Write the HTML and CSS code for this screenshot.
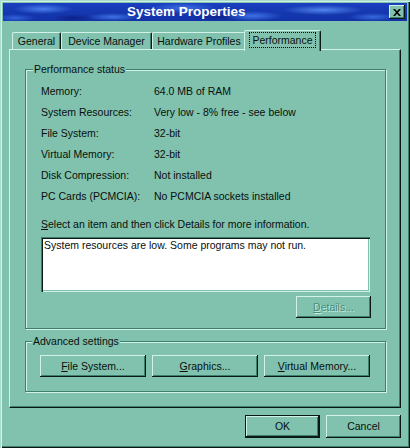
FILE: index.html
```html
<!DOCTYPE html>
<html>
<head>
<meta charset="utf-8">
<title>System Properties</title>
<link rel="stylesheet" href="styles.css">
</head>
<body>
<div class="window">
  <div class="titlebar">
    <span class="title">System Properties</span>
    <span class="close-btn">
      <svg width="8" height="7" viewBox="0 0 8 7"><path d="M0 0h2l2 2.2L6 0h2L5 3.5 8 7H6L4 4.8 2 7H0l3-3.5z" fill="#000"/></svg>
    </span>
  </div>
  <div class="body">
    <div class="tabs">
      <div class="tab tab-general">General</div>
      <div class="tab tab-device">Device Manager</div>
      <div class="tab tab-hardware">Hardware Profiles</div>
      <div class="tab tab-perf selected"><span class="focus">Performance</span></div>
    </div>
    <div class="panel">
      <fieldset class="group status">
        <legend>Performance status</legend>
        <div class="rows">
          <div>Memory:</div><div>64.0 MB of RAM</div>
          <div>System Resources:</div><div>Very low - 8% free - see below</div>
          <div>File System:</div><div>32-bit</div>
          <div>Virtual Memory:</div><div>32-bit</div>
          <div>Disk Compression:</div><div>Not installed</div>
          <div>PC Cards (PCMCIA):</div><div>No PCMCIA sockets installed</div>
        </div>
        <div class="hint"><u>S</u>elect an item and then click Details for more information.</div>
        <div class="listbox">System resources are low. Some programs may not run.</div>
        <div class="details-row"><button class="btn details" disabled><u>D</u>etails...</button></div>
      </fieldset>
      <fieldset class="group advanced">
        <legend>Advanced settings</legend>
        <div class="adv-buttons">
          <button class="btn adv"><u>F</u>ile System...</button>
          <button class="btn adv"><u>G</u>raphics...</button>
          <button class="btn adv"><u>V</u>irtual Memory...</button>
        </div>
      </fieldset>
    </div>
    <div class="actions">
      <button class="btn action default">OK</button>
      <button class="btn action">Cancel</button>
    </div>
  </div>
</div>
</body>
</html>
```
FILE: styles.css
```css
html, body {
  margin: 0;
  padding: 0;
  background: #80c2ae;
}
body {
  font-family: "Liberation Sans", Arial, sans-serif;
  font-size: 10.5px;
  line-height: 13px;
  color: #0a0f0d;
}
.window {
  width: 410px;
  height: 448px;
  box-sizing: border-box;
  padding: 3px;
  background: #80c2ae;
  box-shadow: inset 1px 1px 0 #a9dccd, inset 2px 2px 0 #d2f1e7,
              inset -1px -1px 0 #0b1814, inset -2px -2px 0 #3f7f6d;
}
.titlebar {
  height: 18px;
  display: flex;
  align-items: center;
  background:
    radial-gradient(ellipse 30px 5px at 40px 6px, rgba(90,150,255,.75), transparent),
    radial-gradient(ellipse 26px 4px at 110px 14px, rgba(80,140,255,.7), transparent),
    radial-gradient(ellipse 34px 5px at 180px 5px, rgba(90,150,255,.6), transparent),
    radial-gradient(ellipse 30px 5px at 250px 13px, rgba(80,140,255,.7), transparent),
    radial-gradient(ellipse 40px 5px at 320px 7px, rgba(100,160,255,.75), transparent),
    radial-gradient(ellipse 24px 4px at 370px 14px, rgba(80,140,255,.6), transparent),
    radial-gradient(ellipse 20px 4px at 12px 15px, rgba(70,130,250,.6), transparent),
    radial-gradient(ellipse 22px 4px at 70px 15px, rgba(10,20,110,.6), transparent),
    radial-gradient(ellipse 26px 4px at 215px 14px, rgba(10,20,110,.5), transparent),
    linear-gradient(180deg, #1a3fc0 0%, #1538b0 50%, #1233a8 100%);
}
.title {
  flex: 1;
  padding-left: 124px;
  color: #fff;
  font-weight: bold;
  font-size: 13.5px;
  line-height: 16px;
}
.close-btn {
  width: 16px;
  height: 14px;
  margin-right: 2px;
  box-sizing: border-box;
  display: flex;
  align-items: center;
  justify-content: center;
  background: #80c2ae;
  box-shadow: inset -1px -1px 0 #0b1814, inset 1px 1px 0 #d2f1e7, inset -2px -2px 0 #3f7f6d;
}
.close-btn svg {
  display: block;
}
.body {
  padding: 9px 6px 0 6px;
}
.tabs {
  display: flex;
  align-items: flex-end;
  height: 19px;
  padding-left: 3px;
}
.tab {
  box-sizing: border-box;
  height: 17px;
  text-align: center;
  line-height: 16px;
  border-top: 1px solid #d2f1e7;
  border-left: 1px solid #d2f1e7;
  border-right: 1px solid #0b1814;
  border-radius: 2px 2px 0 0;
  box-shadow: inset -1px 0 0 #3f7f6d;
  background: #80c2ae;
  white-space: nowrap;
}
.tab-general { width: 49px; }
.tab-device { width: 91px; }
.tab-hardware { width: 94px; }
.tab-perf { width: 77px; }
.tab.selected {
  position: relative;
  height: 21px;
  margin-left: -2px;
  margin-bottom: -2px;
  padding-top: 1px;
}
.focus {
  display: inline-block;
  outline: 1px dotted #000;
  padding: 0 2px;
  line-height: 14px;
}
.panel {
  box-sizing: border-box;
  width: 392px;
  height: 359px;
  padding: 13px 14px 0 15px;
  border-top: 1px solid #d2f1e7;
  border-left: 1px solid #d2f1e7;
  border-right: 1px solid #0b1814;
  border-bottom: 1px solid #0b1814;
  box-shadow: inset -1px -1px 0 #3f7f6d;
}
.group {
  margin: 0;
  border: 1px solid #3f7f6d;
  box-shadow: 1px 1px 0 #d2f1e7, inset 1px 1px 0 #d2f1e7;
  min-inline-size: 0;
}
.group legend {
  padding: 0 1px;
  margin-left: -8px;
  background: #80c2ae;
  line-height: 13px;
}
.status {
  padding: 5px 15px 10px 15px;
  display: flex;
  flex-direction: column;
}
.rows {
  display: grid;
  grid-template-columns: 113px 1fr;
  grid-auto-rows: 21px;
  align-items: center;
}
.hint {
  margin-top: 11px;
}
.listbox {
  margin-top: 6px;
  height: 55px;
  box-sizing: border-box;
  padding: 2px 3px;
  background: #fff;
  box-shadow: inset 1px 1px 0 #3f7f6d, inset 2px 2px 0 #0b1814,
              inset -1px -1px 0 #d2f1e7, inset -2px -2px 0 #80c2ae;
}
.details-row {
  display: flex;
  justify-content: flex-end;
  margin-top: 4px;
  margin-right: -1px;
}
.btn {
  font-family: inherit;
  font-size: inherit;
  line-height: 13px;
  color: inherit;
  background: #80c2ae;
  border: 0;
  padding: 0;
  margin: 0;
  box-sizing: border-box;
  box-shadow: inset -1px -1px 0 #0b1814, inset 1px 1px 0 #d2f1e7, inset -2px -2px 0 #3f7f6d;
}
.details {
  width: 75px;
  height: 22px;
  color: #4a8c7a;
  text-shadow: 1px 1px 0 #c6ebdf;
}
.advanced {
  margin-top: 6px;
  padding: 7px 14px 14px 14px;
}
.adv-buttons {
  display: flex;
  gap: 6px;
}
.adv {
  width: 106px;
  height: 22px;
}
.actions {
  display: flex;
  justify-content: flex-end;
  gap: 6px;
  margin-top: 7px;
}
.action {
  width: 75px;
  height: 23px;
}
.action.default {
  box-shadow: inset 0 0 0 1px #0b1814, inset -2px -2px 0 #0b1814, inset 2px 2px 0 #d2f1e7, inset -3px -3px 0 #3f7f6d;
}
```
